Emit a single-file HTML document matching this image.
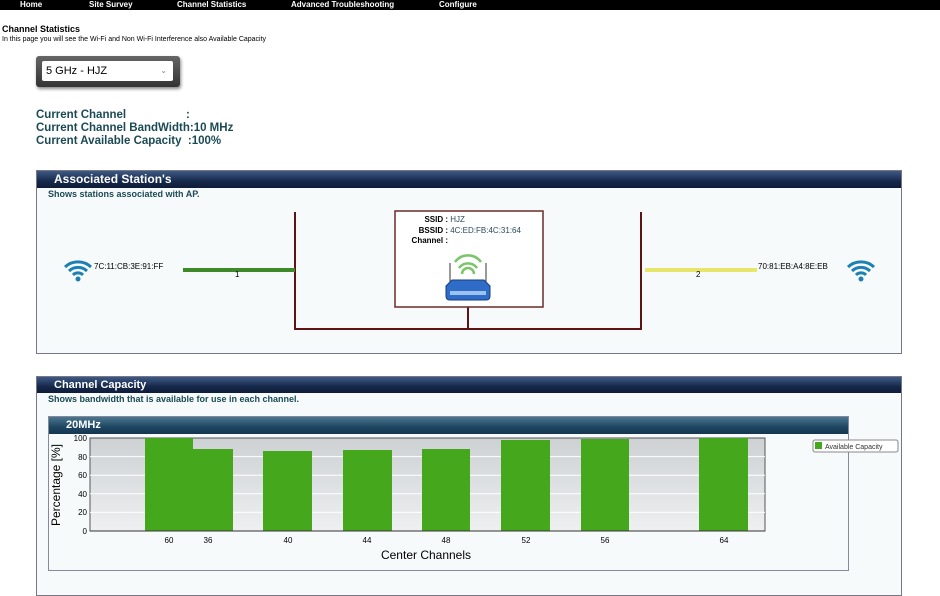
<!DOCTYPE html>
<html><head><meta charset="utf-8"><style>
*{margin:0;padding:0;box-sizing:border-box}
body{width:940px;height:583px;overflow:hidden;background:#fff;font-family:"Liberation Sans",Arial,sans-serif;position:relative}
.abs{position:absolute}
.nav{left:0;top:0;width:940px;height:10px;background:#000}
.nav span{position:absolute;top:0;color:#fff;font-size:8px;font-weight:bold;line-height:10px}
.hdr{background:linear-gradient(#3e5a85,#16284a 60%,#0e1c38);color:#fff;font-weight:bold}
.teal{color:#1b4a55}
</style></head><body>
<div class="abs nav">
<span style="left:20px">Home</span><span style="left:89px">Site Survey</span><span style="left:177px">Channel Statistics</span><span style="left:291px">Advanced Troubleshooting</span><span style="left:439px">Configure</span>
</div>
<div class="abs" style="left:2px;top:24px;font-size:9px;font-weight:bold">Channel Statistics</div>
<div class="abs" style="left:2px;top:36px;font-size:7px">In this page you will see the Wi-Fi and Non Wi-Fi Interference also Available Capacity</div>
<div class="abs" style="left:36px;top:56px;width:144px;height:31px;background:linear-gradient(#666,#333);border-radius:3px;box-shadow:1px 2px 3px #888"></div>
<div class="abs" style="left:42px;top:61px;width:131px;height:20px;background:#fff;border-radius:2px;font-size:11px;line-height:20px;padding-left:4px">5 GHz - HJZ<span style="position:absolute;right:6px;top:0;font-size:8px;color:#888">&#8964;</span></div>
<div class="abs teal" style="left:36px;top:109px;font-size:11.5px;font-weight:bold;line-height:13px">
<div>Current Channel<span style="position:absolute;left:150px">:</span></div>
<div>Current Channel BandWidth:10 MHz</div>
<div>Current Available Capacity &nbsp;:100%</div>
</div>

<div class="abs" style="left:36px;top:170px;width:866px;height:184px;border:1px solid #778;background:#f6fafb"></div>
<div class="abs hdr" style="left:37px;top:171px;width:864px;height:17px;font-size:12px;line-height:17px;padding-left:17px">Associated Station's</div>
<div class="abs teal" style="left:48px;top:189px;font-size:9px;font-weight:bold">Shows stations associated with AP.</div>

<svg class="abs" style="left:0;top:0" width="940" height="583">
<g stroke="#5e1414" stroke-width="2" fill="none">
<path d="M295 212V329H641V212M468 307V329"/>
</g>
<rect x="395" y="211" width="148" height="96" fill="#fff" stroke="#6b2a2a" stroke-width="1.5"/>
<line x1="183" y1="270" x2="295" y2="270" stroke="#3e8a2a" stroke-width="4"/>
<line x1="645" y1="270" x2="757" y2="270" stroke="#e8e66a" stroke-width="4"/>
<g fill="none" stroke="#1d7fb3" stroke-width="3">
<path d="M65 267a19 19 0 0 1 26 0M69 271a13 13 0 0 1 18 0M73 275a7 7 0 0 1 10 0"/>
<path d="M848 267a19 19 0 0 1 26 0M852 271a13 13 0 0 1 18 0M856 275a7 7 0 0 1 10 0"/>
</g>
<circle cx="78" cy="279" r="2.5" fill="#1d7fb3"/><circle cx="861" cy="279" r="2.5" fill="#1d7fb3"/>
<g fill="none" stroke="#7ac46a" stroke-width="2.5">
<path d="M455 262a16 16 0 0 1 26 0M459 268a11 11 0 0 1 18 0M462 274a6 6 0 0 1 12 0"/>
</g>
<line x1="450" y1="263" x2="450" y2="285" stroke="#333"/><line x1="486" y1="263" x2="486" y2="285" stroke="#333"/>
<path d="M446 286L452 280H484L490 286V296Q490 300 486 300H450Q446 300 446 296Z" fill="#2f6cc8" stroke="#1a3e80"/>
<rect x="450" y="291" width="36" height="4" fill="#9cc2f0"/>
</svg>
<div class="abs" style="left:400px;top:215px;font-size:8px;line-height:10.5px;width:130px">
<div><b style="display:inline-block;width:48px;text-align:right">SSID :</b> <span style="color:#2a4a5a">HJZ</span></div>
<div><b style="display:inline-block;width:48px;text-align:right">BSSID :</b> <span style="color:#2a4a5a">4C:ED:FB:4C:31:64</span></div>
<div><b style="display:inline-block;width:48px;text-align:right">Channel :</b></div>
</div>
<div class="abs" style="left:94px;top:262px;font-size:8px">7C:11:CB:3E:91:FF</div>
<div class="abs" style="left:235px;top:270px;font-size:8px">1</div>
<div class="abs" style="left:696px;top:270px;font-size:8px">2</div>
<div class="abs" style="left:758px;top:262px;font-size:8px">70:81:EB:A4:8E:EB</div>

<div class="abs" style="left:36px;top:376px;width:866px;height:220px;border:1px solid #778;background:#f6fafb"></div>
<div class="abs hdr" style="left:37px;top:377px;width:864px;height:16px;font-size:11px;line-height:16px;padding-left:17px">Channel Capacity</div>
<div class="abs teal" style="left:48px;top:394px;font-size:9px;font-weight:bold">Shows bandwidth that is available for use in each channel.</div>
<div class="abs" style="left:48px;top:416px;width:801px;height:155px;border:1px solid #889;background:#f6fafb"></div>
<div class="abs" style="left:49px;top:417px;width:799px;height:17px;background:linear-gradient(#4a7890,#1d4560 60%,#153650);color:#fff;font-weight:bold;font-size:11px;line-height:17px;padding-left:17px">20MHz</div>
<svg class="abs" style="left:0;top:0" width="940" height="583">
<defs><linearGradient id="g" x1="0" x2="0" y1="0" y2="1"><stop offset="0" stop-color="#cdd1d4"/><stop offset="1" stop-color="#eef0f1"/></linearGradient></defs>
<rect x="90" y="438" width="675" height="93" fill="url(#g)" stroke="#555"/>
<g stroke="#fff" stroke-width="1"><path d="M90 456.6H765M90 475.2H765M90 493.8H765M90 512.4H765"/></g>
<g fill="#45a81c">
<rect x="145" y="438" width="48" height="93"/><rect x="193" y="449" width="40" height="82"/>
<rect x="263" y="451" width="49" height="80"/><rect x="343" y="450" width="49" height="81"/>
<rect x="422" y="449" width="48" height="82"/><rect x="501" y="440" width="49" height="91"/>
<rect x="581" y="439" width="48" height="92"/><rect x="699" y="438" width="49" height="93"/>
</g>
<line x1="90" y1="531" x2="765" y2="531" stroke="#333"/>
<g font-size="8" text-anchor="end" font-family="Liberation Sans"><text x="87" y="441">100</text><text x="87" y="460">80</text><text x="87" y="478">60</text><text x="87" y="497">40</text><text x="87" y="515">20</text><text x="87" y="534">0</text></g>
<g font-size="8" text-anchor="middle" font-family="Liberation Sans"><text x="169" y="543">60</text><text x="208" y="543">36</text><text x="288" y="543">40</text><text x="367" y="543">44</text><text x="446" y="543">48</text><text x="526" y="543">52</text><text x="605" y="543">56</text><text x="724" y="543">64</text></g>
<text x="426" y="559" font-size="12" text-anchor="middle" font-family="Liberation Sans">Center Channels</text>
<text transform="translate(60 485) rotate(-90)" font-size="12" text-anchor="middle" font-family="Liberation Sans">Percentage [%]</text>
<rect x="813" y="440" width="85" height="12" rx="2" fill="#fff" stroke="#888"/>
<rect x="815" y="442" width="7" height="7" fill="#45a81c"/>
<text x="825" y="449" font-size="7" font-family="Liberation Sans" fill="#333">Available Capacity</text>
</svg>
</body></html>
